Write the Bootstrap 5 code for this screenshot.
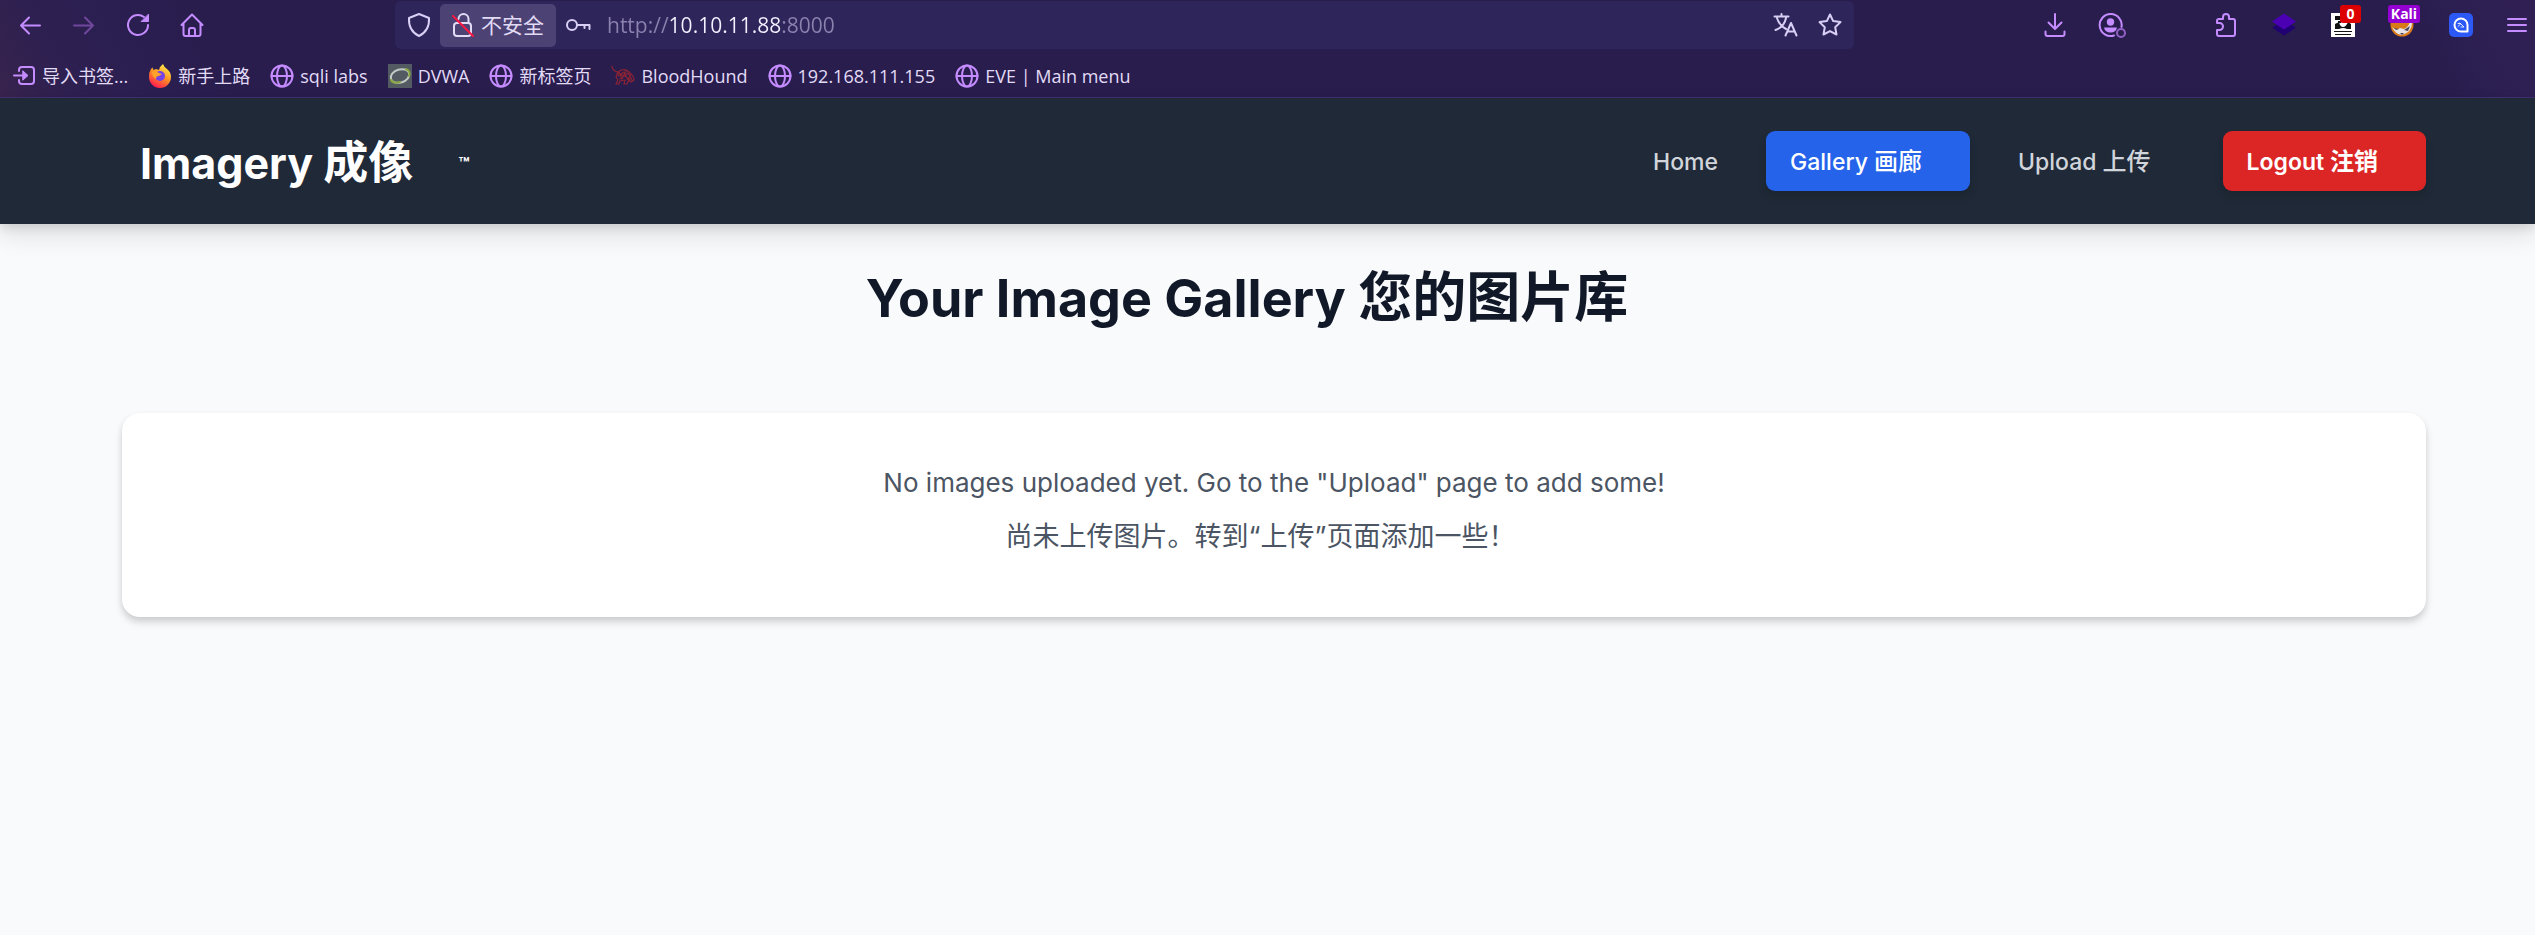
<!DOCTYPE html>
<html lang="zh-CN">
<head>
<meta charset="utf-8">
<meta name="viewport" content="width=device-width, initial-scale=1">
<title>Imagery</title>
<link href="https://cdn.jsdelivr.net/npm/bootstrap@5.3.0/dist/css/bootstrap.min.css" rel="stylesheet">
<style>
body{background:#f9fafc;font-family:Inter,"Noto Sans CJK SC",sans-serif;color:#111827}
svg{display:block;fill:none;stroke:currentColor;stroke-width:2;stroke-linecap:round;stroke-linejoin:round}
.flat{stroke:none}
/* browser chrome */
.chrome{background:linear-gradient(63deg,#38234d 0,#2e2050 60px,#2b1f51 130px,#291d4e 210px,#291d4e calc(100% - 110px),#2e2053 calc(100% - 50px),#301f53 100%);border-bottom:1px solid #403070;font-family:"Open Sans","Noto Sans CJK SC",sans-serif;color:#e2dbf6}
.toolbar{height:51px;padding:1px 2px 2px 12px}
.tool{width:36px;height:36px;padding:0;border:0;background:none;color:#c58cff;display:flex;align-items:center;justify-content:center;position:relative;flex:none}
.tool:disabled{color:#70479d}
.nav-tools{gap:18px;margin-right:185px}
.ext-tools{gap:21px;margin-left:183px}
.ext{width:38px}
.ext-first{margin-left:57px}
.menu-tool{width:32px}
.address{height:48px;background:#2e255b;border-radius:6px;padding:0 6px;color:#d9cff5}
.address .tool{color:#d9cff5}
.identity{height:43px;width:116px;border:0;border-radius:5px;background:#4c4273;color:#e2dbf6;font-size:21px;line-height:30px;padding:0;gap:7px;margin-left:3px}
.url{min-width:0;border:0;outline:0;font-size:21px;line-height:30px;padding:0;margin-left:11px;color:transparent;background:linear-gradient(90deg,#8c82ae 62px,#f4f0ff 62px,#f4f0ff 174px,#8c82ae 174px);-webkit-background-clip:text;background-clip:text}
.bookmarks{height:46px;padding:3px 12px 0 12px;gap:20px;font-size:18px;line-height:24px}
.bookmarks a{color:inherit;text-decoration:none;display:flex;align-items:center;gap:6px;white-space:nowrap}
.bookmarks svg{color:#c58cff;flex:none}
.tag{position:absolute;top:-2px;height:18px;border-radius:3px;color:#fff;font-weight:700;font-size:14px;line-height:18px;text-align:center}
.tag-red{left:16px;width:21px;background:#dc0000}
.tag-kali{left:5px;width:32px;background:#9500d3}
/* site */
.site-header{background:#1f2937;box-shadow:0 12px 22px rgba(0,0,0,.10),0 4px 9px rgba(0,0,0,.10);position:relative;padding:33px 109px 33px 122px}
.brand{font-size:43px;line-height:56px;font-weight:700;color:#fff;text-decoration:none;padding:4px 0 0 18px}
.brand .zh{font-size:45px}
.brand sup{font-size:18px;line-height:18px;font-weight:700;top:0;vertical-align:9px;margin-left:45px}
.site-link{font-size:23px;line-height:36px;font-weight:500;padding:13px 24px 11px;border-radius:9px;border:0;color:#d1d5db;text-decoration:none}
.site-link .zh{font-size:24px}
.trail{padding-right:1em}
.site-link.current{background:#2563eb;color:#fff;box-shadow:0 6px 9px rgba(0,0,0,.12)}
.logout{background:#dc2626;color:#fff;font-weight:600;box-shadow:0 6px 9px rgba(0,0,0,.12)}
.site-main{padding:38px 109px 48px 122px}
.page-title{font-size:52px;line-height:72px;font-weight:700;margin:0 0 78px}
.page-title .zh{font-size:54px}
.empty-card{border:0;border-radius:18px;background:#fff;box-shadow:0 6px 9px rgba(0,0,0,.10),0 3px 6px rgba(0,0,0,.10);padding:43px 48px 53px;font-size:26px;line-height:54px;color:#4b5563}
.empty-card .zh{font-size:27px}
</style>
</head>
<body>
<svg class="d-none" aria-hidden="true"><symbol id="globe" viewBox="0 0 24 24"><circle cx="12" cy="12" r="10.5"/><ellipse cx="12" cy="12" rx="5" ry="10.5"/><path d="M1.5 12h21"/></symbol></svg>
<div class="chrome">
  <div class="toolbar d-flex align-items-center">
    <div class="nav-tools d-flex">
      <button class="tool" aria-label="Back"><svg width="24" height="24"><path d="M22 12.500H3M11 4.500l-8 8 8 8"/></svg></button>
      <button class="tool" aria-label="Forward" disabled><svg width="24" height="24"><path d="M2 12.500h19M13 4.500l8 8-8 8"/></svg></button>
      <button class="tool" aria-label="Reload"><svg width="24" height="24"><path d="M22 12a10 10 0 1 1-4-8"/><path d="M22.500 1.500v7h-7z" fill="currentColor" stroke-width="1"/></svg></button>
      <button class="tool" aria-label="Home"><svg width="24" height="24"><path d="M1.500 12 12 1.500 22.500 12M3.500 10.500V21q0 2 2 2h13q2 0 2-2V10.500M9 23v-6q0-2 2-2h2q2 0 2 2v6"/></svg></button>
    </div>
    <form class="address d-flex align-items-center flex-grow-1">
      <button type="button" class="tool" aria-label="Protection"><svg width="24" height="26"><path d="M12 2 22 6C22.500 14 19 20.500 12 24 5 20.500 1.500 14 2 6z"/></svg></button>
      <button type="button" class="identity d-flex align-items-center justify-content-center"><svg width="22" height="26"><path d="M6.500 7a5 5 0 0 1 10 0v4M6 11h10q3 0 3 3v7q0 3-3 3H5q-3 0-3-3v-7q0-3 3-3z"/><path d="m1 4 20 20" stroke="#ff1644"/></svg><span>不安全</span></button>
      <button type="button" class="tool ms-1" aria-label="Saved logins"><svg width="26" height="22"><circle cx="7" cy="11" r="5"/><path d="M12 11h12.500v4M19.500 11v3"/></svg></button>
      <input class="url flex-grow-1" aria-label="Address" value="http://10.10.11.88:8000">
      <button type="button" class="tool" aria-label="Translate"><svg width="26" height="26"><path d="M1.500 4.500h14M8.500 2v2.500M4 6c1.500 5 5 9 9 11M13 6c-1 5-5 10-10.500 12M12.500 23.500 18 11l5.500 12.500M14.500 19.500h7"/></svg></button>
      <button type="button" class="tool ms-2" aria-label="Bookmark"><svg width="26" height="26"><path d="m13 2.500 3.200 6.600 7.300 1-5.300 5.100 1.300 7.300-6.500-3.400-6.500 3.400 1.300-7.300-5.300-5.100 7.300-1z"/></svg></button>
    </form>
    <div class="ext-tools d-flex">
      <button class="tool" aria-label="Downloads"><svg width="22" height="24"><path d="M11 1v15M4.500 9.500 11 16l6.500-6.500M1.500 18.500V21q0 2 2 2h15q2 0 2-2v-2.500"/></svg></button>
      <button class="tool" aria-label="Account"><svg width="28" height="26"><path d="M16 23.500A11 11 0 1 1 23.500 15"/><circle cx="12.500" cy="10" r="3.700" fill="currentColor" stroke="none"/><path d="M6 15.500h13q-1 5-6.500 5T6 15.500z" fill="currentColor" stroke="none"/><circle cx="23" cy="21" r="4" stroke="#9161c6"/></svg></button>
      <button class="tool ext-first" aria-label="Extensions"><svg width="22" height="26"><path d="M2 9.500V9q0-2 2-2h4V5a3 3 0 0 1 6 0v2h4q2 0 2 2v13q0 2-2 2H4q-2 0-2-2v-4h2.500a3.500 3.500 0 0 0 0-7H2z"/></svg></button>
      <button class="tool ext" aria-label="Layers"><svg class="flat" width="26" height="26"><path d="m1 15.500 12-7 12 7-12 8z" fill="#210073"/><path d="m1 9.500 12-8 12 8-12 8z" fill="#4b00b4"/></svg></button>
      <button class="tool ext" aria-label="Panda"><svg class="flat" width="24" height="24"><path fill="#fff" d="M0 0h24v24H0z"/><path fill="#111" d="M4 3h5v4H4zM4 11l4-2q1 5 4 5t5-5l3 2v5h-4q-4-2-8 0H4zM7 8h3v2H7zm-4 10h18v1H3zm1 3h16v1H4z"/></svg><span class="tag tag-red">0</span></button>
      <button class="tool ext" aria-label="Profile"><svg class="flat" width="24" height="24"><circle cx="12" cy="12" r="11.500" fill="#d97a18"/><path d="M2 14q4 4 8 1l4 1q5-2 6-8l2 2q0 9-10 12-7-1-10-8z" fill="#e8e3e4"/><path d="m4 15 5 1-3 1zm10 2 6-4-2 5zm-4 3h4l-2 2z" fill="#494157"/></svg><span class="tag tag-kali">Kali</span></button>
      <button class="tool ext" aria-label="Lookup"><svg width="24" height="24"><rect width="24" height="24" rx="5" fill="#2c58f5" stroke="none"/><path d="M18.500 18.500H12A6.500 6.500 0 1 1 18.500 12z" stroke="#fff"/><path d="M9 10.500h3l-3 3M11 10l4 4h-3" stroke="#dfe8ff" stroke-width="1"/></svg></button>
      <button class="tool menu-tool" aria-label="Menu"><svg width="20" height="20"><path d="M1 4h18M1 10h18M1 16h18"/></svg></button>
    </div>
  </div>
  <nav class="bookmarks d-flex align-items-center" aria-label="Bookmarks">
    <a href="#"><svg width="24" height="24"><path d="M7 7V6q0-3 3-3h9q3 0 3 3v11q0 3-3 3h-9q-3 0-3-3v-1M2 11.500h12"/><path d="m11 7 5 4.500-5 4.500z" fill="currentColor" stroke-width="1"/></svg>导入书签...</a>
    <a href="#"><svg class="flat" width="24" height="24" viewBox="0 0 24 24"><defs><linearGradient id="fx" x1=".8" y1="0" x2=".3" y2="1"><stop offset="0" stop-color="#fff44f"/><stop offset=".5" stop-color="#ff9124"/><stop offset="1" stop-color="#ff1653"/></linearGradient></defs><path d="M3 5 4.500 3.500 5.500 6 8 5l3 1q1-4 4-6 1 3 4 5 4 3 4 8a11 11 0 0 1-22 0Q1 8 3 5z" fill="url(#fx)"/><circle cx="12" cy="12" r="5" fill="#7542e5"/><path d="M4 8q4-2 7 1l3 1-3 2q-3 0-3 3-4-2-4-7z" fill="#ffa32c"/></svg>新手上路</a>
    <a href="#"><svg width="24" height="24"><use href="#globe"/></svg>sqli labs</a>
    <a href="#"><svg width="24" height="24"><path d="M0 0h24v24H0z" fill="#535a61" stroke="none"/><ellipse cx="12" cy="12" rx="9.500" ry="6.500" transform="rotate(-18 12 12)" stroke="#c2c9c4"/><path d="M3 16q2 4 9 2M18 5q5 2 3 7" stroke="#87a642"/></svg>DVWA</a>
    <a href="#"><svg width="24" height="24"><use href="#globe"/></svg>新标签页</a>
    <a href="#"><svg width="24" height="24" color="#8c2334"><g stroke="#8c2334" stroke-width="1.2"><path d="M1 2q0 5 6 6 7-5 12 1 4 3 4 7l-3 2-2-2-2 4h-3l1-4-5 1-1 3H5l2-4-2-3 2-5M8 8l3 7 4-8M7 12l6-4 4 8 3-6M9 15l8-6 4 7M6 9l8 3 5 4"/></g></svg>BloodHound</a>
    <a href="#"><svg width="24" height="24"><use href="#globe"/></svg>192.168.111.155</a>
    <a href="#"><svg width="24" height="24"><use href="#globe"/></svg>EVE | Main menu</a>
  </nav>
</div>
<header class="site-header d-flex align-items-center justify-content-between">
  <a class="brand" href="#">Imagery <span class="zh">成像</span><sup>™</sup></a>
  <nav class="d-flex align-items-center gap-4" aria-label="Site">
    <a class="site-link" href="#">Home</a>
    <a class="site-link current" href="#" aria-current="page">Gallery <span class="zh trail">画廊</span></a>
    <a class="site-link" href="#">Upload <span class="zh trail">上传</span></a>
    <button class="site-link logout">Logout <span class="zh trail">注销</span></button>
  </nav>
</header>
<main class="site-main">
  <h1 class="page-title text-center">Your Image Gallery <span class="zh trail">您的图片库</span></h1>
  <section class="card empty-card text-center">
    <p class="m-0">No images uploaded yet. Go to the "Upload" page to add some!</p>
    <p class="m-0"><span class="zh trail">尚未上传图片。转到“上传”页面添加一些！</span></p>
  </section>
</main>
<script src="https://cdn.jsdelivr.net/npm/bootstrap@5.3.0/dist/js/bootstrap.bundle.min.js"></script>
</body>
</html>
